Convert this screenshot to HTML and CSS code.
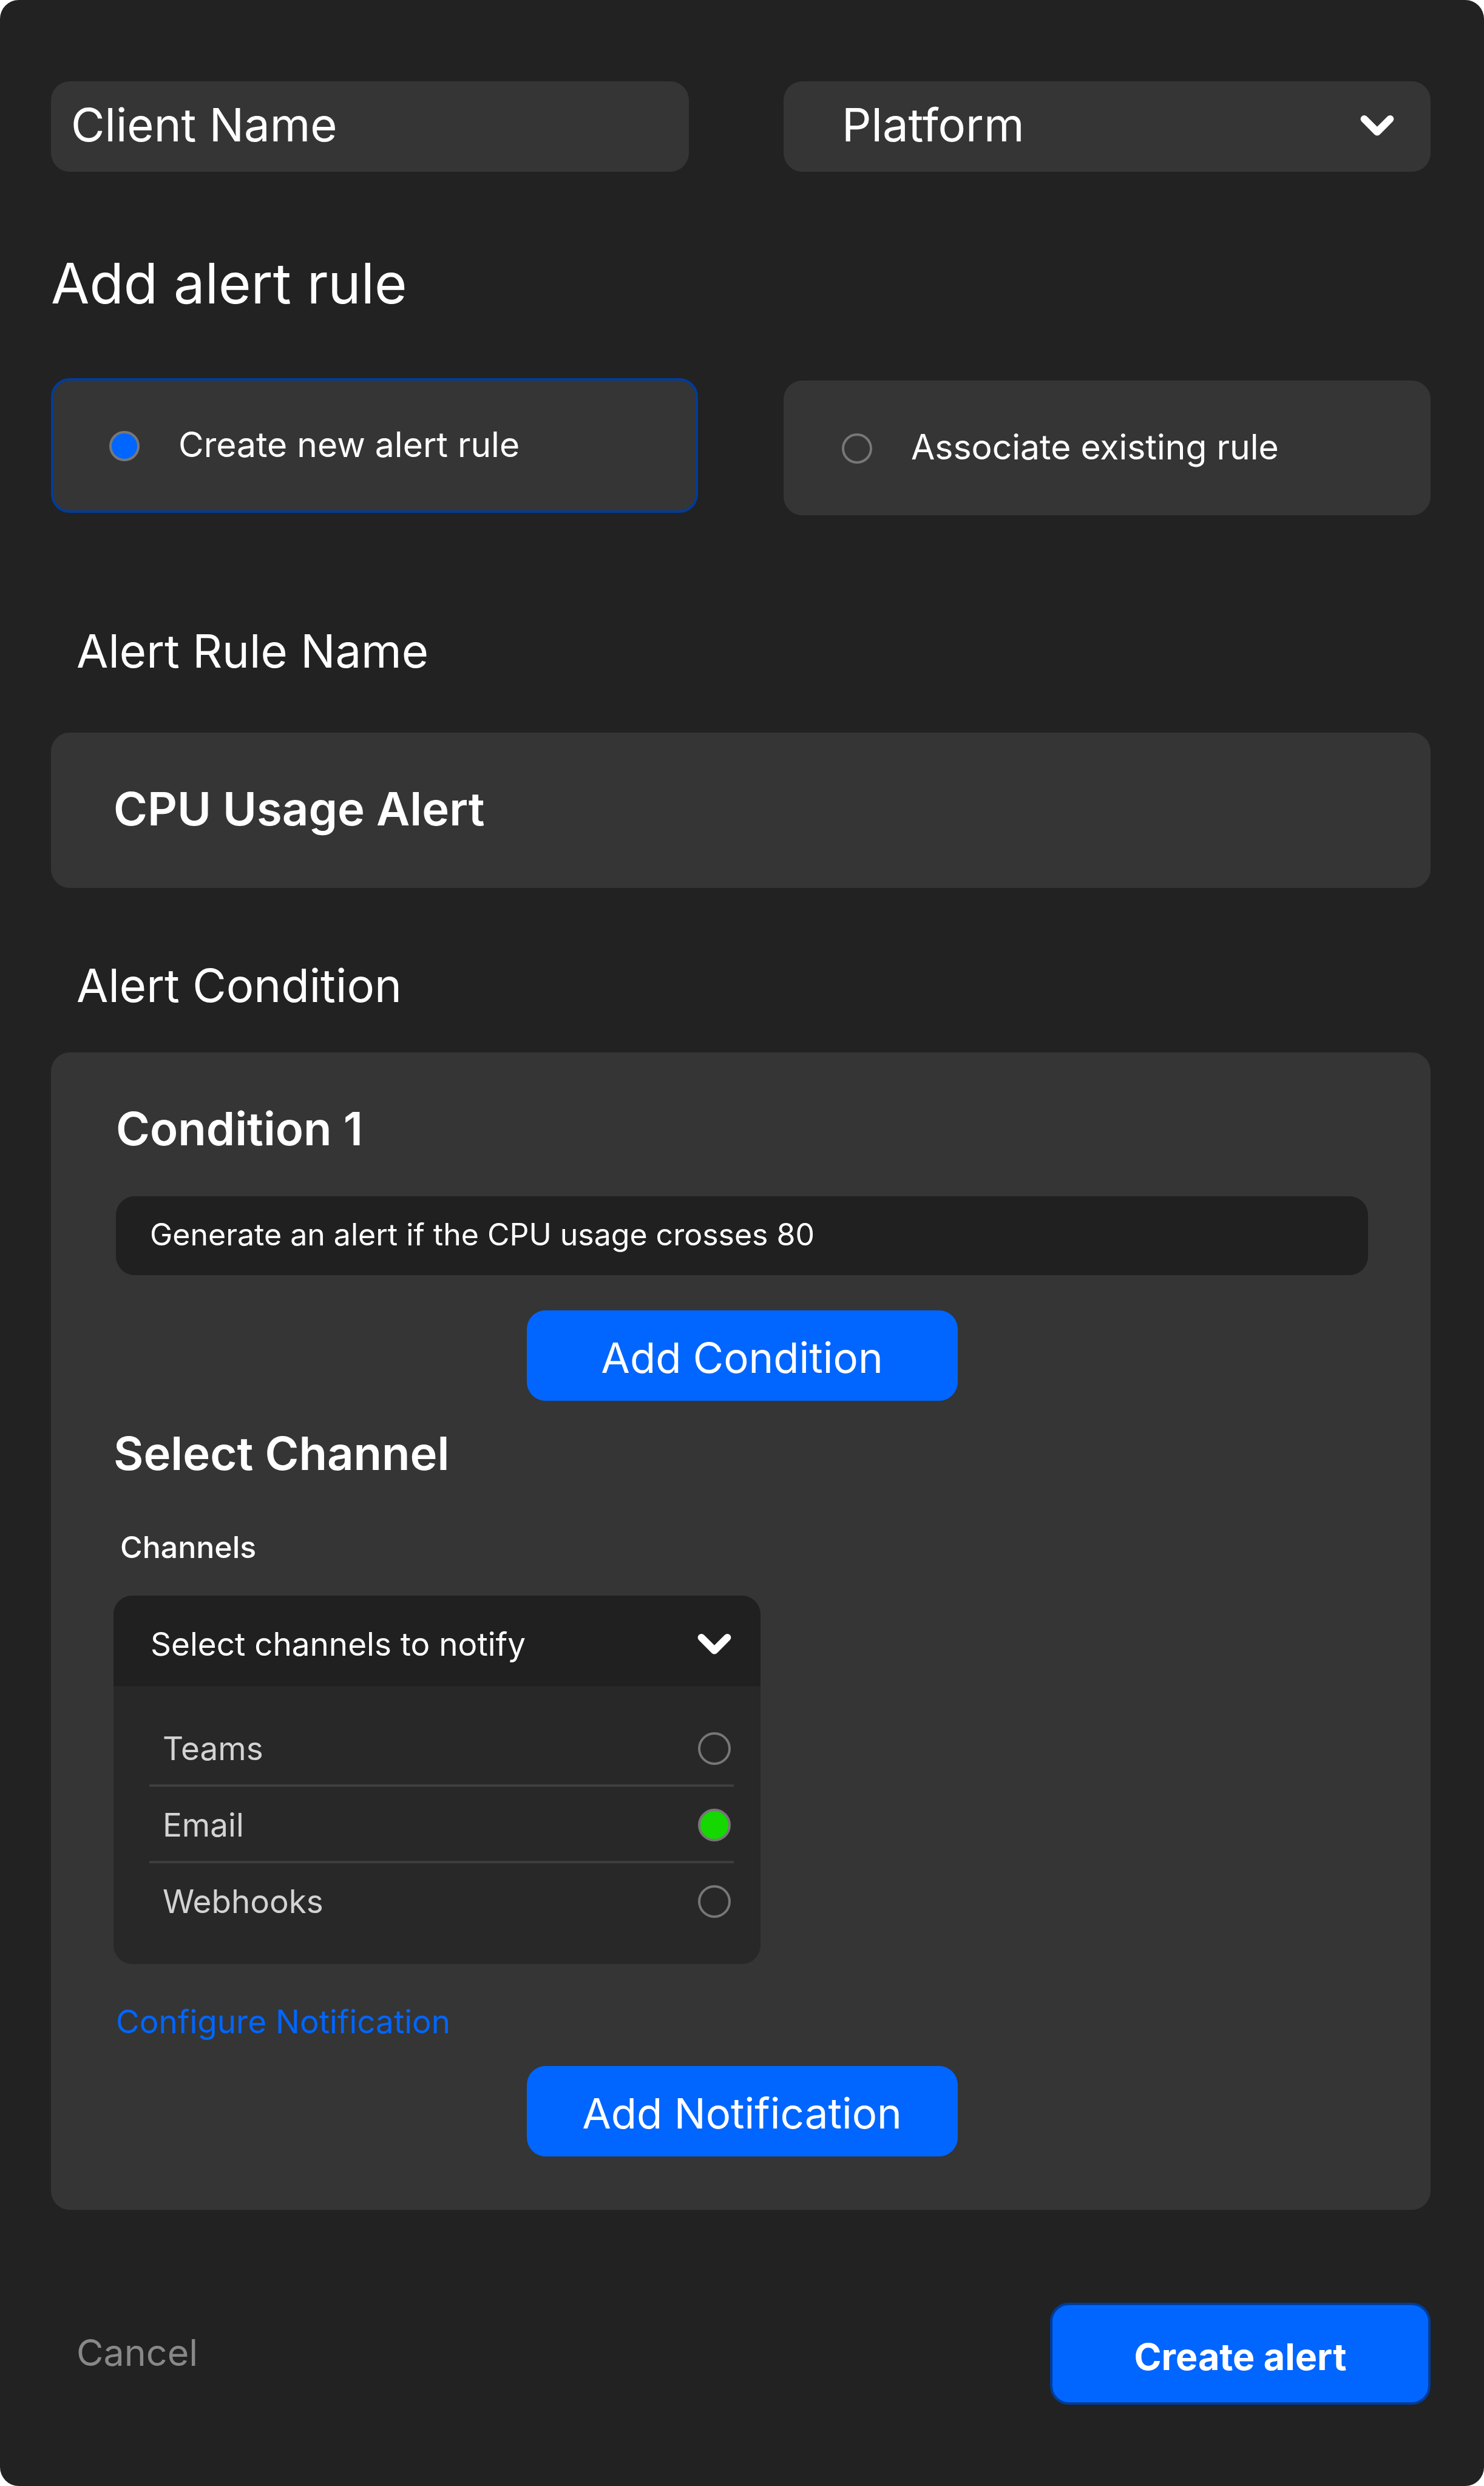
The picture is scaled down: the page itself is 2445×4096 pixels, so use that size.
FILE: index.html
```html
<!DOCTYPE html>
<html lang="en">
<head>
  <meta charset="utf-8">
  <meta name="viewport" content="width=device-width, initial-scale=1">
  <title>Add alert rule</title>
  <link rel="stylesheet" href="styles.css">
</head>
<body>
  <form class="panel">
    <div class="columns">
      <div class="client">
        <input class="field field--client" type="text" placeholder="Client Name" aria-label="Client Name">
      </div>
      <div class="picker">
        <select class="field field--platform" aria-label="Platform">
          <option>Platform</option>
        </select>
        <svg class="chevron picker__chevron" viewBox="0 0 58 36" aria-hidden="true"><path d="M6.4 6.4 29 29 51.6 6.4"/></svg>
      </div>
    </div>

    <h1 class="title">Add alert rule</h1>

    <div class="columns choices" role="radiogroup" aria-label="Rule source">
      <label class="choice choice--new">
        <input class="radio radio--blue" type="radio" name="source" checked>
        <span class="choice__text">Create new alert rule</span>
      </label>
      <label class="choice choice--existing">
        <input class="radio radio--blue" type="radio" name="source">
        <span class="choice__text">Associate existing rule</span>
      </label>
    </div>

    <label class="section-label section-label--name" for="rule-name">Alert Rule Name</label>
    <input class="field field--name" id="rule-name" type="text" value="CPU Usage Alert">

    <h2 class="section-label section-label--condition">Alert Condition</h2>
    <section class="card">
      <div class="group">
        <label class="subtitle" for="condition-1">Condition 1</label>
        <input class="condition" id="condition-1" type="text" value="Generate an alert if the CPU usage crosses 80">
        <button class="button" type="button">Add Condition</button>
      </div>

      <h3 class="subtitle subtitle--channel">Select Channel</h3>
      <p class="channels-label" id="channels-label">Channels</p>
      <div class="dropdown">
        <button class="dropdown__head" type="button" aria-expanded="true">
          Select channels to notify
          <svg class="chevron" viewBox="0 0 58 36" aria-hidden="true"><path d="M6.4 6.4 29 29 51.6 6.4"/></svg>
        </button>
        <div class="dropdown__list" role="radiogroup" aria-labelledby="channels-label">
          <label class="channel">Teams <input class="radio radio--green" type="radio" name="channel"></label>
          <label class="channel">Email <input class="radio radio--green" type="radio" name="channel" checked></label>
          <label class="channel">Webhooks <input class="radio radio--green" type="radio" name="channel"></label>
        </div>
      </div>

      <div class="group">
        <a class="configure" href="#notification">Configure Notification</a>
        <button class="button" type="button">Add Notification</button>
      </div>
    </section>

    <div class="actions">
      <button class="cancel" type="button">Cancel</button>
      <button class="submit" type="submit">Create alert</button>
    </div>
  </form>
</body>
</html>
```

FILE: styles.css
```css
* {
  box-sizing: border-box;
}

body {
  margin: 0;
  background: #fff;
  color: #fff;
  font-family: Inter, "Liberation Sans", sans-serif;
  font-optical-sizing: none;
}

h1, h2, h3, p {
  margin: 0;
  font-weight: 400;
}

input, select, button {
  margin: 0;
  border: 0;
  color: inherit;
  font: inherit;
  font-optical-sizing: none;
}

button {
  cursor: pointer;
}

.panel {
  display: flex;
  flex-direction: column;
  min-height: 100vh;
  padding: 134px 88px 134px 84px;
  border-radius: 31px;
  background: #222;
}

.columns {
  display: grid;
  grid-template-columns: 1fr 1fr;
  column-gap: 141px;
}

/* Fields */

.field {
  display: block;
  width: 100%;
  height: 149px;
  padding: 0 36px 7px;
  border-radius: 31px;
  background: #353535;
  font-size: 76px;
}

.field::placeholder {
  color: #fff;
  opacity: 1;
}

.client {
  padding-right: 15px;
}

.field--client {
  padding-left: 33px;
}

.picker {
  position: relative;
}

.field--platform {
  appearance: none;
  padding-left: 96px;
}

.picker__chevron {
  position: absolute;
  top: 56px;
  right: 60px;
  pointer-events: none;
}

.chevron {
  width: 56px;
  height: 34px;
  fill: none;
  stroke: #fff;
  stroke-width: 12.8;
  stroke-linecap: round;
  stroke-linejoin: round;
}

.field--name {
  height: 256px;
  padding-left: 103px;
  font-weight: 600;
}

.title {
  margin: 128px 0 100px;
  font-size: 92px;
  line-height: 112px;
}

/* Rule source */

.choices {
  min-height: 226px;
}

.choice {
  display: flex;
  align-items: center;
  gap: 64px;
  height: 222px;
  padding: 0 92px;
  border: 4px solid #353535;
  border-radius: 31px;
  background: #353535;
  font-size: 57px;
}

.choice--new {
  border-color: #003c99;
}

.choice--existing {
  align-self: end;
}

.choice__text {
  padding-bottom: 4px;
}

.radio {
  flex: none;
  appearance: none;
  width: 50px;
  height: 50px;
  border: 4px solid #777;
  border-radius: 50%;
}

.choice .radio {
  margin-top: 2px;
}

.radio--blue:checked {
  background: #06f;
}

.radio--green {
  width: 54px;
  height: 54px;
}

.radio--green:checked {
  background: #14d800;
}

/* Sections */

.section-label {
  padding-left: 42px;
  font-size: 76px;
  line-height: 92px;
}

.section-label--name {
  margin: 177px 0 89px;
}

.section-label--condition {
  margin: 114px 0 65px;
}

.card {
  display: flex;
  flex-direction: column;
  padding: 79px 103px 88px;
  border-radius: 31px;
  background: #353535;
}

.group {
  display: flex;
  flex-direction: column;
  padding-left: 4px;
}

.subtitle {
  font-size: 76px;
  font-weight: 600;
  line-height: 92px;
}

.subtitle--channel {
  margin: 40px 0 79px;
}

.condition {
  height: 130px;
  margin: 66px 0 58px;
  padding: 0 56px 5px;
  border-radius: 31px;
  background: #202020;
  font-size: 50px;
}

.button {
  align-self: center;
  width: 710px;
  height: 149px;
  padding: 7px 0 0;
  border-radius: 31px;
  background: #06f;
  font-size: 69px;
}

.channels-label {
  margin-bottom: 50px;
  padding-left: 11px;
  font-size: 50px;
  font-weight: 500;
  line-height: 60px;
}

.dropdown {
  width: 1066px;
  max-width: 100%;
  border-radius: 31px;
  overflow: hidden;
  background: #282828;
  font-size: 53px;
}

.dropdown__head {
  display: flex;
  align-items: center;
  justify-content: space-between;
  width: 100%;
  height: 149px;
  padding: 11px 48px 0 61px;
  background: #202020;
  text-align: left;
}

.dropdown__list {
  padding: 40px 44px 40px 59px;
}

.channel {
  display: flex;
  align-items: center;
  justify-content: space-between;
  height: 126px;
  padding: 4px 5px 0 22px;
  border-bottom: 4px solid #3e3e3e;
  color: #d3d3d3;
}

.channel:last-child {
  border-color: transparent;
}

.configure {
  align-self: flex-start;
  margin: 63px 0 41px;
  color: #06f;
  font-size: 53px;
  line-height: 64px;
  text-decoration: none;
}

/* Footer */

.actions {
  display: flex;
  align-items: center;
  justify-content: space-between;
  margin-top: 153px;
  font-size: 61px;
}

.cancel {
  padding: 0 0 5px 42px;
  background: none;
  color: #888;
}

.submit {
  width: 627px;
  height: 168px;
  padding: 10px 0 0;
  border: 4px solid #003c99;
  border-radius: 31px;
  background: #06f;
  font-weight: 700;
}
```
